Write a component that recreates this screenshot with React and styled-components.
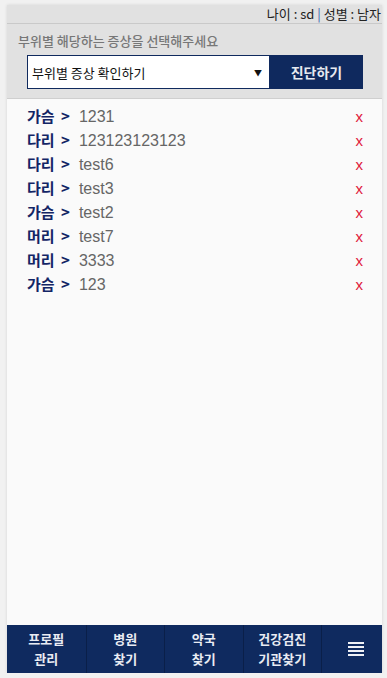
import React from "react"
import styled, { createGlobalStyle } from "styled-components"

const items = [
  { part: "가슴", name: "1231" },
  { part: "다리", name: "123123123123" },
  { part: "다리", name: "test6" },
  { part: "다리", name: "test3" },
  { part: "가슴", name: "test2" },
  { part: "머리", name: "test7" },
  { part: "머리", name: "3333" },
  { part: "가슴", name: "123" },
]

const menus = [
  ["프로필", "관리"],
  ["병원", "찾기"],
  ["약국", "찾기"],
  ["건강검진", "기관찾기"],
]

const App = () => {
  return (
    <>
      <GlobalStyle />
      <Page>
        <InfoBar>
          나이 : sd <Pipe>|</Pipe> 성별 : 남자
        </InfoBar>
        <SearchPanel>
          <Guide>부위별 해당하는 증상을 선택해주세요</Guide>
          <SearchRow>
            <SelectBox>
              <span>부위별 증상 확인하기</span>
              <Arrow>▼</Arrow>
            </SelectBox>
            <SubmitButton>진단하기</SubmitButton>
          </SearchRow>
        </SearchPanel>
        <List>
          {items.map((item, i) => (
            <Row key={i}>
              <Part>{item.part} &gt;</Part>
              <Name>{item.name}</Name>
              <Remove>x</Remove>
            </Row>
          ))}
        </List>
        <Nav>
          {menus.map((m, i) => (
            <NavItem key={i} $first={i === 0}>
              {m[0]}
              <br />
              {m[1]}
            </NavItem>
          ))}
          <NavItem $menu>
            <Burger>
              <i />
              <i />
              <i />
              <i />
            </Burger>
          </NavItem>
        </Nav>
      </Page>
    </>
  )
}

// Styling Only

const GlobalStyle = createGlobalStyle`
  html, body {
    margin: 0;
    padding: 0;
    background: #f1f1f1;
    font-family: "Noto Sans CJK KR", "Noto Sans", sans-serif;
  }
`

const Page = styled.div`
  width: 375px;
  height: 668px;
  margin: 5px 0 0 7px;
  background: #fafafa;
  box-shadow: 0 0 3px rgba(0, 0, 0, 0.12);
  display: flex;
  flex-direction: column;
`

const InfoBar = styled.div`
  height: 18px;
  background: #e1e1e1;
  border-bottom: 1px solid #c9c9c9;
  text-align: right;
  font-size: 13px;
  line-height: 18px;
  color: #222;
  padding-right: 1px;
  white-space: nowrap;
`

const Pipe = styled.span`
  color: #3a5db0;
`

const SearchPanel = styled.div`
  background: #e1e1e1;
  border-bottom: 1px solid #cfcfcf;
  padding: 9px 19px 9px 20px;
`

const Guide = styled.div`
  font-size: 13px;
  color: #777;
  line-height: 16px;
  margin-left: -9px;
  margin-bottom: 6px;
  font-weight: 500;
`

const SearchRow = styled.div`
  display: flex;
  height: 34px;
`

const SelectBox = styled.div`
  flex: 1;
  display: flex;
  align-items: center;
  justify-content: space-between;
  background: #fff;
  border: 1px solid #102a5e;
  padding: 0 7px 0 4px;
  font-size: 13px;
  color: #111;
`

const Arrow = styled.span`
  font-size: 8px;
  color: #111;
`

const SubmitButton = styled.button`
  width: 93px;
  border: none;
  background: #0f295e;
  color: #e6e9f0;
  font-family: inherit;
  font-size: 14px;
  font-weight: 700;
`

const List = styled.div`
  flex: 1;
  padding: 5px 19px 0 20px;
`

const Row = styled.div`
  display: flex;
  align-items: baseline;
  height: 24px;
  line-height: 24px;
  font-size: 16px;
`

const Part = styled.span`
  color: #132565;
  font-weight: 700;
  font-size: 15px;
  margin-right: 9px;
  word-spacing: 3px;
`

const Name = styled.span`
  flex: 1;
  color: #666;
  font-family: "Liberation Sans", Arial, sans-serif;
`

const Remove = styled.span`
  color: #e0203a;
  font-size: 15px;
  font-family: "Liberation Sans", Arial, sans-serif;
`

const Nav = styled.div`
  height: 48px;
  display: flex;
  background: #0f2a5f;
`

const NavItem = styled.div`
  flex: ${(p) => (p.$menu ? "0 0 61px" : "0 0 78.5px")};
  display: flex;
  align-items: center;
  justify-content: center;
  text-align: center;
  color: #e9ecf3;
  font-size: 13px;
  font-weight: 700;
  line-height: 20px;
  border-left: ${(p) => (p.$first ? "none" : "1px solid #0a1f49")};
  box-sizing: border-box;
`

const Burger = styled.div`
  display: flex;
  flex-direction: column;
  gap: 2px;
  margin-left: 8px;
  i {
    display: block;
    width: 16px;
    height: 2px;
    background: #eef0f5;
  }
`

export default App
